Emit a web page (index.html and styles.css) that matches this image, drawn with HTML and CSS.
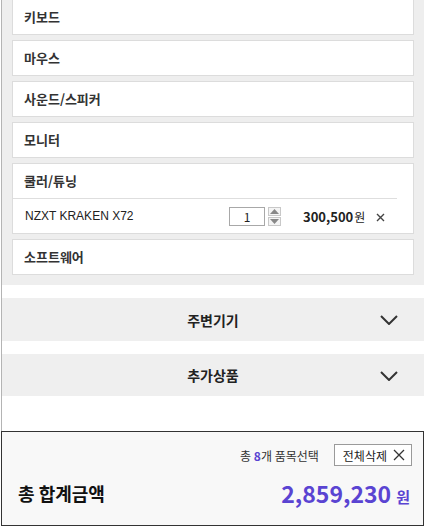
FILE: index.html
```html
<!DOCTYPE html>
<html>
<head>
  <title>견적 카트</title>
  <link rel="stylesheet" href="styles.css">
</head>
<body>
  <div class="cart">
    <div class="parts">
      <div class="part"><div class="part-head">키보드</div></div>
      <div class="part"><div class="part-head">마우스</div></div>
      <div class="part"><div class="part-head">사운드/스피커</div></div>
      <div class="part"><div class="part-head">모니터</div></div>
      <div class="part">
        <div class="part-head">쿨러/튜닝</div>
        <div class="item">
          <span class="item-name">NZXT KRAKEN X72</span>
          <span class="qty">1</span>
          <span class="spin">
            <span class="spin-btn"><svg width="9" height="5" viewBox="0 0 9 5"><path d="M4.5 0L9 5H0z" fill="#888"/></svg></span>
            <span class="spin-btn"><svg width="9" height="5" viewBox="0 0 9 5"><path d="M0 0H9L4.5 5z" fill="#888"/></svg></span>
          </span>
          <span class="item-price">300,500<small>원</small></span>
          <svg class="item-del" width="9" height="9" viewBox="0 0 9 9"><path d="M1 1l7 7M8 1L1 8" stroke="#444" stroke-width="1.4"/></svg>
        </div>
      </div>
      <div class="part"><div class="part-head">소프트웨어</div></div>
    </div>

    <div class="group">
      <span>주변기기</span>
      <svg class="chev" width="18" height="10" viewBox="0 0 18 10"><path d="M1 1l8 8 8-8" fill="none" stroke="#333" stroke-width="2"/></svg>
    </div>
    <div class="group">
      <span>추가상품</span>
      <svg class="chev" width="18" height="10" viewBox="0 0 18 10"><path d="M1 1l8 8 8-8" fill="none" stroke="#333" stroke-width="2"/></svg>
    </div>

    <div class="summary">
      <div class="summary-top">
        <span class="count">총 <b>8</b>개 품목선택</span>
        <span class="clear-all">전체삭제 <svg width="12" height="12" viewBox="0 0 12 12"><path d="M1 1l10 10M11 1L1 11" stroke="#333" stroke-width="1.3"/></svg></span>
      </div>
      <div class="summary-total">
        <span class="total-label">총 합계금액</span>
        <span class="total-price">2,859,230<small>원</small></span>
      </div>
    </div>
  </div>
</body>
</html>
```

FILE: styles.css
```css
* {
  box-sizing: border-box;
}

body {
  margin: 0;
  font-family: "Noto Sans CJK KR", "Noto Sans", sans-serif;
  color: #222;
  background: #fff;
}

.cart {
  width: 423px;
  margin-left: 1px;
  border-left: 1px solid #b4b4b4;
}

.parts {
  background: #eeeeee;
  padding: 0 10px 10px 10px;
  display: flex;
  flex-direction: column;
  gap: 5px;
}

.part {
  background: #fff;
  border: 1px solid #dcdcdc;
}

.part:first-child {
  margin-top: -1px;
}

.part-head {
  height: 34px;
  line-height: 34px;
  padding-left: 11px;
  font-size: 13px;
  font-weight: bold;
  color: #333;
}

.item {
  display: flex;
  align-items: center;
  height: 35px;
  margin-right: 16px;
  border-top: 1px solid #dedede;
  padding-left: 12px;
  font-size: 12px;
}

.item-name {
  width: 204px;
  font-family: "Liberation Sans", sans-serif;
  color: #222;
}

.qty {
  width: 36px;
  height: 19px;
  border: 1px solid #a8a8a8;
  text-align: center;
  line-height: 17px;
  font-size: 12px;
}

.spin {
  display: flex;
  flex-direction: column;
  margin-left: 3px;
  gap: 1px;
}

.spin-btn {
  width: 13px;
  height: 9px;
  border: 1px solid #c8c8c8;
  background: #f4f4f4;
  display: flex;
  align-items: center;
  justify-content: center;
}

.item-price {
  margin-left: 22px;
  font-size: 13px;
  font-weight: bold;
  color: #222;
}

.item-price small {
  font-size: 12px;
  font-weight: normal;
  margin-left: 1px;
}

.item-del {
  margin-left: 11px;
  margin-top: 2px;
}

.group {
  position: relative;
  margin-top: 13px;
  height: 43px;
  background: #efefef;
  display: flex;
  align-items: center;
  justify-content: center;
  font-size: 14px;
  font-weight: bold;
  color: #222;
}

.group + .group {
  height: 42px;
}

.chev {
  position: absolute;
  right: 26px;
  top: 17px;
}

.summary {
  margin-top: 35px;
  margin-left: -1px;
  height: 95px;
  border: 1px solid #333;
  background: #f8f8f8;
  padding: 12px 11px 0 16px;
}

.summary-top {
  display: flex;
  justify-content: flex-end;
  align-items: center;
  gap: 15px;
  font-size: 12px;
  color: #333;
}

.count b {
  color: #5a44d2;
}

.clear-all {
  display: flex;
  align-items: center;
  gap: 6px;
  height: 22px;
  padding: 0 6px 0 8px;
  border: 1px solid #9a9a9a;
  background: #fff;
  font-size: 12px;
  color: #222;
}

.summary-total {
  display: flex;
  justify-content: space-between;
  align-items: center;
  margin-top: 10px;
}

.total-label {
  font-size: 18px;
  font-weight: bold;
  color: #111;
}

.total-price {
  font-size: 23px;
  font-weight: bold;
  color: #5a44d2;
  margin-right: 2px;
}

.total-price small {
  font-size: 15px;
  margin-left: 5px;
}
```
